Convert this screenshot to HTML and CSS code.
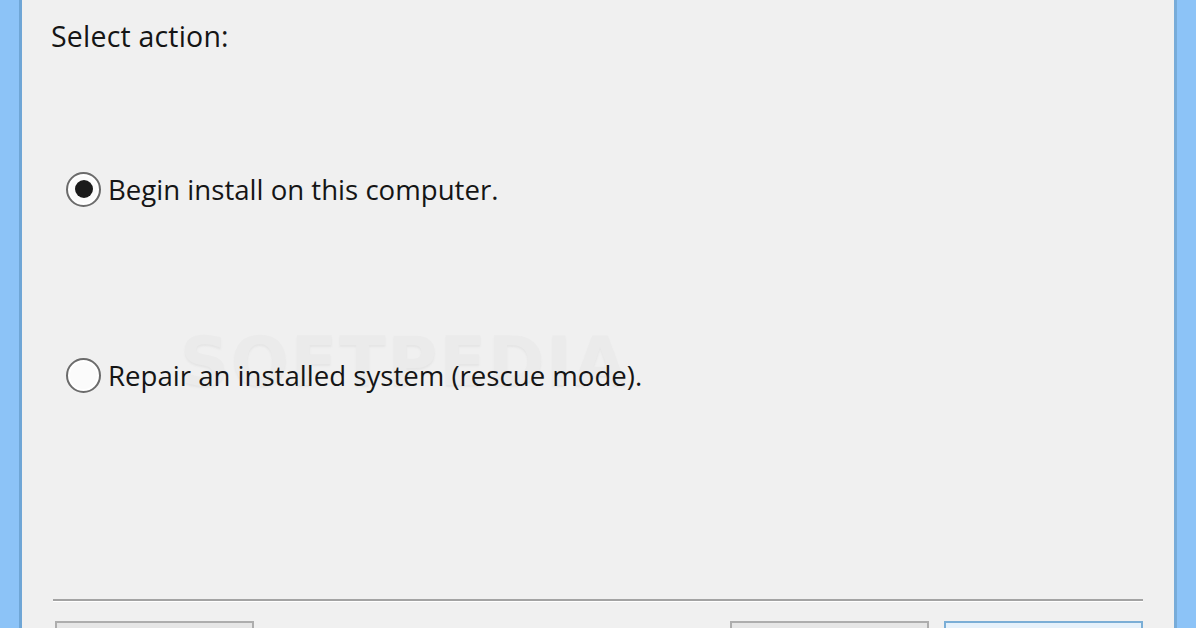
FILE: index.html
```html
<!DOCTYPE html>
<html>
<head>
<meta charset="utf-8">
<link rel="stylesheet" href="styles.css">
</head>
<body>
<div class="frame">
  <div class="edge edge-left"></div>
  <div class="dialog">
    <div class="heading">Select action:</div>
    <div class="options">
      <label class="option">
        <span class="radio checked"><span class="dot"></span></span>
        <span class="label">Begin install on this computer.</span>
      </label>
      <label class="option option-second">
        <span class="radio"></span>
        <span class="label">Repair an installed system (rescue mode).</span>
      </label>
    </div>
    <div class="separator"></div>
    <div class="buttons">
      <div class="btn"></div>
      <div class="spacer"></div>
      <div class="btn"></div>
      <div class="btn btn-default"></div>
    </div>
    <div class="watermark">SOFTPEDIA</div>
  </div>
  <div class="edge edge-right"></div>
</div>
</body>
</html>
```
FILE: styles.css
```css
* { box-sizing: border-box; }
html, body { margin: 0; padding: 0; overflow: hidden; }
body {
  width: 1196px;
  height: 628px;
  background: #f0f0f0;
  font-family: "Open Sans", "Noto Sans", sans-serif;
  color: #151515;
}
.frame {
  display: flex;
  height: 628px;
  overflow: hidden;
}
.edge {
  background: #8cc3f7;
  flex: none;
}
.edge-left {
  width: 22px;
  border-right: 3px solid #6fa6d6;
}
.edge-right {
  width: 22px;
  border-left: 3px solid #78acd9;
}
.dialog {
  flex: 1;
  position: relative;
  background: #f0f0f0;
  padding: 18px 31px 0 29px;
  display: flex;
  flex-direction: column;
  overflow: hidden;
}
.heading {
  font-size: 28.5px;
  line-height: 36px;
  letter-spacing: 0.2px;
}
.options {
  padding-left: 15px;
  display: flex;
  flex-direction: column;
}
.option {
  display: flex;
  align-items: center;
  gap: 7px;
  height: 36px;
  margin-top: 117px;
}
.option-second {
  margin-top: 150px;
}
.radio {
  width: 35px;
  height: 35px;
  border-radius: 50%;
  border: 2px solid #6b6b6b;
  background: #fbfbfb;
  box-shadow: inset 0 0 0 2px #fff;
  display: flex;
  align-items: center;
  justify-content: center;
  flex: none;
}
.radio .dot {
  width: 18px;
  height: 18px;
  border-radius: 50%;
  background: #1b1b1b;
}
.label {
  font-size: 27.6px;
  line-height: 36px;
}
.separator {
  margin-top: 206px;
  margin-left: 2px;
  height: 3px;
  border-top: 2px solid #a3a3a3;
  border-bottom: 1px solid #ffffff;
}
.buttons {
  display: flex;
  margin-top: 19px;
  gap: 15px;
  padding-left: 4px;
}
.btn {
  width: 199px;
  height: 60px;
  border: 2px solid #adadad;
  background: #e6e6e6;
  flex: none;
}
.btn-default {
  border-color: #7aaed6;
  background: #e5f1fb;
}
.spacer { flex: 1; }
.watermark {
  position: absolute;
  left: 158px;
  top: 322px;
  font-family: "DejaVu Sans", sans-serif;
  font-weight: bold;
  font-size: 68px;
  letter-spacing: 2px;
  color: #ebebeb;
  text-shadow: 0 2px 2px #e5e5e5;
  pointer-events: none;
  z-index: 0;
}
.heading, .options, .separator, .buttons { position: relative; z-index: 1; }
```
